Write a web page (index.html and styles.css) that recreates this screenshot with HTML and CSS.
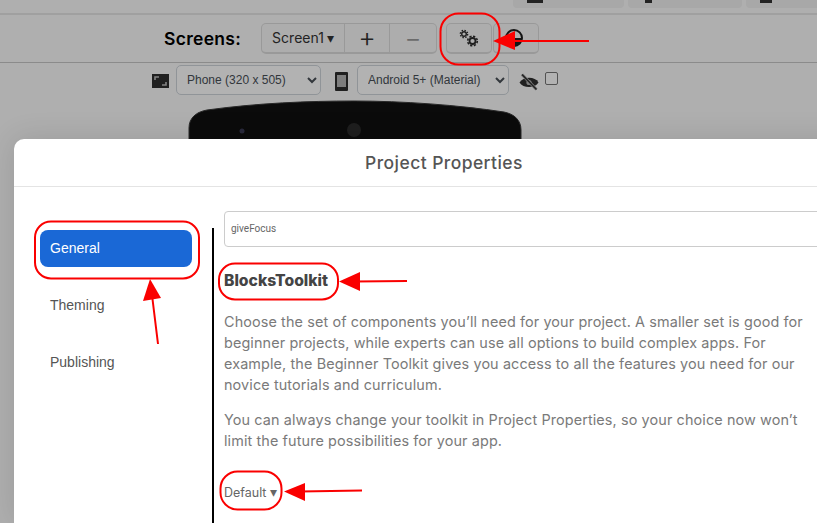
FILE: index.html
```html
<!DOCTYPE html>
<html lang="en">
<head>
<meta charset="utf-8">
<title>Project Properties</title>
<link rel="stylesheet" href="styles.css">
</head>
<body>
<div class="page">
  <div class="topstrip">
    <div class="tab"><span class="tab-mark tab-mark-a"></span></div>
    <div class="tab tab-b"><span class="tab-mark tab-mark-b"></span></div>
    <div class="tab tab-c"><span class="tab-mark tab-mark-c"></span></div>
  </div>
  <div class="toolbar">
    <span class="screens-label">Screens:</span>
    <div class="btn-group">
      <div class="tb-btn tb-screen">Screen1 <span class="caret">▾</span></div>
      <div class="tb-btn tb-plus">+</div>
      <div class="tb-btn tb-minus">−</div>
    </div>
    <div class="tb-btn tb-gear">
      <svg width="20" height="18" viewBox="0 0 20 18">
        <circle cx="5" cy="5" r="2.300" fill="none" stroke="#2c2c2c" stroke-width="1.400"/>
        <circle cx="5" cy="5" r="3.700" fill="none" stroke="#2c2c2c" stroke-width="1.300" stroke-dasharray="1.500 1.406"/>
        <circle cx="13.500" cy="12" r="3" fill="none" stroke="#2c2c2c" stroke-width="1.800"/>
        <circle cx="13.500" cy="12" r="4.800" fill="none" stroke="#2c2c2c" stroke-width="1.600" stroke-dasharray="2.200 1.570"/>
      </svg>
    </div>
    <div class="tb-btn tb-theme">
      <svg width="20" height="20" viewBox="0 0 20 20">
        <circle cx="10" cy="10" r="8" fill="none" stroke="#1d1d1d" stroke-width="2"/>
        <path d="M10 10 L18 10 A8 8 0 0 1 6 17 Z" fill="#1d1d1d"/>
      </svg>
    </div>
  </div>
  <div class="subbar">
    <svg class="sub-icon" width="17" height="14" viewBox="0 0 17 14">
      <rect width="17" height="14" fill="#2e2e2e"/>
      <path d="M3 6V3h4M14 8v3h-4" fill="none" stroke="#bdbdbd" stroke-width="1.600"/>
    </svg>
    <select class="sub-select sub-select-size"><option>Phone (320 x 505)</option></select>
    <svg class="sub-icon-phone" width="13" height="19" viewBox="0 0 13 19">
      <rect width="13" height="19" rx="1" fill="#2e2e2e"/>
      <rect x="2" y="3" width="9" height="12" fill="#b5b5b5"/>
    </svg>
    <select class="sub-select sub-select-os"><option>Android 5+ (Material)</option></select>
    <svg class="sub-icon-eye" width="20" height="18" viewBox="0 0 20 18">
      <path d="M0.500 9.500C4 3.500 16 3 19.500 9.500C16 15.500 4 15.500 0.500 9.500Z" fill="#2e2e2e"/>
      <circle cx="10" cy="9.500" r="2.600" fill="#b0b0b0"/>
      <path d="M3 1.500L17.500 16.500" stroke="#b0b0b0" stroke-width="3"/>
      <path d="M3 1.500L17.500 16.500" stroke="#2e2e2e" stroke-width="1.500"/>
    </svg>
    <span class="sub-check"></span>
  </div>
  <div class="phone-wrap">
    <svg width="334" height="60" viewBox="0 0 334 60">
      <path d="M1 60V28C1 18 8 12 19 10C70 3 120 1 166 1C215 1 270 5 316 12C326 14 333 20 333 30V60Z" fill="#101010" stroke="#3a3a3a"/>
      <circle cx="54" cy="31" r="2.500" fill="#3c3c55"/>
      <circle cx="166" cy="30" r="7" fill="#2c2c2c"/>
    </svg>
  </div>
</div>

<div class="scrim">
  <div class="modal">
    <div class="modal-title">Project Properties</div>
    <div class="modal-body">
      <nav class="side">
        <div class="side-item side-item-active">General</div>
        <div class="side-item">Theming</div>
        <div class="side-item">Publishing</div>
      </nav>
      <main class="content">
        <div class="field">giveFocus</div>
        <h2 class="heading">BlocksToolkit</h2>
        <p class="copy">Choose the set of components you’ll need for your project. A smaller set is good for beginner projects, while experts can use all options to build complex apps. For example, the Beginner Toolkit gives you access to all the features you need for our novice tutorials and curriculum.</p>
        <p class="copy">You can always change your toolkit in Project Properties, so your choice now won’t limit the future possibilities for your app.</p>
        <div class="dropdown">Default <span class="caret">▾</span></div>
      </main>
    </div>
  </div>
</div>

<svg class="marks" width="817" height="523" viewBox="0 0 817 523">
  <g fill="none" stroke="#fa0000" stroke-width="2">
    <rect x="440.500" y="13.500" width="59" height="51" rx="18"/>
    <rect x="35" y="221.500" width="164" height="57" rx="16"/>
    <rect x="219" y="263.500" width="119" height="36" rx="16"/>
    <rect x="220.500" y="471.500" width="61" height="38" rx="17"/>
    <path d="M589 41H510M158 344L152 295M407 281L355 281.500M362 490.500L300 491.500"/>
  </g>
  <g fill="#fa0000">
    <path d="M493 41L515 31V50Z"/>
    <path d="M150 279L143 301L161 298Z"/>
    <path d="M339 281.500L360 272V291Z"/>
    <path d="M284 491.500L305 483V501Z"/>
  </g>
</svg>
</body>
</html>
```
FILE: styles.css
```css
* { box-sizing: border-box; }
html, body {
  margin: 0;
  height: 100%;
  overflow: hidden;
}
body {
  background: #fbfbfb;
  font-family: "Inter", "Liberation Sans", sans-serif;
}

/* Page behind the dialog */
.page { width: 817px; height: 523px; overflow: hidden; }

.topstrip {
  height: 15px;
  display: flex;
  justify-content: flex-end;
  gap: 4px;
  border-bottom: 2px solid #e6e6e6;
}
.tab {
  width: 111px;
  height: 8px;
  background: #f1f1f1;
  border-radius: 0 0 4px 4px;
  position: relative;
  overflow: hidden;
}
.tab-b { width: 114px; }
.tab-c { width: 71px; border-radius: 0 0 0 4px; }
.tab-mark { position: absolute; top: 0; height: 3px; background: #333; }
.tab-mark-a { left: 14px; width: 16px; }
.tab-mark-b { left: 17px; width: 7px; }
.tab-mark-c { left: 14px; width: 12px; }

.toolbar {
  height: 48px;
  display: flex;
  align-items: center;
  padding-left: 164px;
  border-bottom: 1px solid #c8c8c8;
  padding-bottom: 1px;
}
.screens-label {
  font-size: 17.500px;
  font-weight: 600;
  letter-spacing: 0.3px;
  color: #000;
  width: 97px;
  white-space: nowrap;
}
.btn-group { display: flex; height: 31px; }
.tb-btn {
  height: 31px;
  display: flex;
  align-items: center;
  justify-content: center;
  border: 1px solid #dcdcdc;
  border-bottom-width: 2px;
  background: #f8f8f8;
  color: #333;
}
.tb-screen {
  width: 84px;
  font-size: 14px;
  gap: 3px;
  border-radius: 5px 0 0 5px;
  white-space: nowrap;
}
.tb-plus {
  width: 45px;
  font-size: 27px;
  font-weight: 300;
  border-left: 0;
}
.tb-minus {
  width: 47px;
  font-size: 26px;
  font-weight: 300;
  color: #9a9a9a;
  border-left: 0;
  border-radius: 0 5px 5px 0;
}
.tb-gear { width: 46px; margin-left: 9px; border-radius: 5px; }
.tb-theme { width: 46px; border-radius: 5px; margin-left: 1px; justify-content: flex-start; padding-left: 10px; }

.subbar {
  height: 37px;
  display: flex;
  align-items: center;
  padding-left: 152px;
  padding-bottom: 3px;
}
.sub-icon { flex: none; margin: 2px 7px 0 0; }
.sub-select {
  height: 30px;
  font-family: "Liberation Sans", sans-serif;
  font-size: 12px;
  color: #495057;
  background: #fff;
  border: 1px solid #ced4da;
  border-radius: 5px;
  padding: 0 4px 0 6px;
}
.sub-select-size { width: 145px; }
.sub-select-os { width: 152px; }
.sub-icon-phone { flex: none; margin: 2px 9px 0 14px; }
.sub-icon-eye { flex: none; margin: 4px 6px 0 10px; }
.sub-check {
  width: 13px;
  height: 13px;
  border: 1px solid #767676;
  border-radius: 2px;
  background: #fff;
  margin-bottom: 4px;
}

.phone-wrap { padding: 0 0 0 188px; line-height: 0; }

/* Dim layer and dialog */
.scrim {
  position: absolute;
  inset: 0;
  overflow: hidden;
  background: rgba(0, 0, 0, 0.3);
}
.modal {
  position: absolute;
  left: 14px;
  top: 139px;
  width: 860px;
  height: 384px;
  background: #fff;
  border-radius: 10px 10px 0 0;
  box-shadow: 0 0 30px rgba(0, 0, 0, 0.12);
  display: flex;
  flex-direction: column;
}
.modal-title {
  height: 48px;
  border-bottom: 1px solid #e4e4e4;
  display: flex;
  align-items: center;
  justify-content: center;
  font-size: 17.500px;
  font-weight: 500;
  letter-spacing: 0.43px;
  color: #555;
  padding-bottom: 1px;
}
.modal-body { display: flex; flex: 1; align-items: stretch; min-height: 0; }

.side {
  width: 174px;
  margin: 41px 0 0 26px;
  padding-top: 2px;
  border-right: 2px solid #000;
  flex: none;
}
.side-item {
  width: 152px;
  height: 37px;
  margin-bottom: 20px;
  padding: 0 0 2px 10px;
  display: flex;
  align-items: center;
  font-family: "Liberation Sans", sans-serif;
  font-size: 14px;
  color: #555;
  border-radius: 8px;
}
.side-item-active { background: #1a68d6; color: #fff; }

.content {
  flex: 1;
  min-width: 0;
  padding: 24px 8px 0 10px;
  overflow: hidden;
}
.field {
  height: 36px;
  border: 1px solid #ccc;
  border-radius: 4px;
  display: flex;
  align-items: center;
  padding: 0 0 2px 6px;
  font-family: "Roboto", "Liberation Sans", sans-serif;
  font-size: 10px;
  color: #666;
}
.heading {
  margin: 25px 0 0;
  font-size: 15.700px;
  line-height: 18px;
  font-weight: 800;
  color: #444;
}
.copy {
  margin: 21px 0 0;
  width: 600px;
  font-size: 14.400px;
  letter-spacing: 0.115px;
  line-height: 21px;
  color: #7a7a7a;
}
.copy + .copy { margin-top: 14px; }
.dropdown {
  margin-top: 31px;
  font-size: 12.500px;
  line-height: 20px;
  color: #666;
}
.caret { font-size: 14px; }

/* Red annotations drawn on the screenshot */
.marks { position: absolute; left: 0; top: 0; pointer-events: none; }
```
